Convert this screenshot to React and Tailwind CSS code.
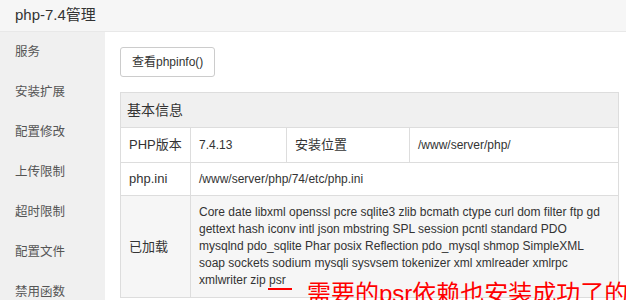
const MENU = ['服务', '安装扩展', '配置修改', '上传限制', '超时限制', '配置文件', '禁用函数'];

const LOADED = [
  'Core date libxml openssl pcre sqlite3 zlib bcmath ctype curl dom filter ftp gd',
  'gettext hash iconv intl json mbstring SPL session pcntl standard PDO',
  'mysqlnd pdo_sqlite Phar posix Reflection pdo_mysql shmop SimpleXML',
  'soap sockets sodium mysqli sysvsem tokenizer xml xmlreader xmlrpc',
  'xmlwriter zip psr',
];

export default function App() {
  return (
    <div
      className="relative w-[626px] h-[300px] overflow-hidden bg-white text-[#333]"
      style={{ fontFamily: '"Liberation Sans", "Noto Sans CJK SC", sans-serif' }}
    >
      {/* Title bar */}
      <div className="h-[32px] bg-[#f6f6f6] border-b border-[#e8e8e8] flex items-center px-[15px] text-[15px] text-[#333]">
        php-7.4管理
      </div>

      <div className="flex h-[268px]">
        {/* Sidebar */}
        <div className="w-[105px] shrink-0 bg-[#f0f0f0]">
          {MENU.map((item) => (
            <div key={item} className="h-[40px] leading-[40px] px-[15px] text-[12.5px] text-[#555]">
              {item}
            </div>
          ))}
        </div>

        {/* Content */}
        <div className="flex-1 pl-[15px] pr-[7px] pt-[15px]">
          <button className="h-[30px] px-[11px] border border-[#ccc] rounded-[3px] bg-white text-[12px] text-[#333]">
            查看phpinfo()
          </button>

          <table className="mt-[15px] w-[499px] border-collapse text-[13px] text-[#333]">
            <thead>
              <tr>
                <th
                  colSpan={4}
                  className="h-[35px] bg-[#f0f0f0] border border-[#ddd] text-left font-normal text-[14px] px-[6px]"
                >
                  基本信息
                </th>
              </tr>
            </thead>
            <tbody>
              <tr className="h-[35px]">
                <td className="w-[70px] border border-[#ddd] px-[8px]">PHP版本</td>
                <td className="w-[96px] border border-[#ddd] px-[8px] text-[12px]">7.4.13</td>
                <td className="w-[123px] border border-[#ddd] px-[8px]">安装位置</td>
                <td className="border border-[#ddd] px-[8px] text-[12px]">/www/server/php/</td>
              </tr>
              <tr className="h-[33px]">
                <td className="border border-[#ddd] px-[8px]">php.ini</td>
                <td colSpan={3} className="border border-[#ddd] px-[8px] text-[12px]">
                  /www/server/php/74/etc/php.ini
                </td>
              </tr>
              <tr className="bg-[#f6f6f6]">
                <td className="border border-[#ddd] px-[8px]">已加载</td>
                <td colSpan={3} className="border border-[#ddd] px-[8px] py-[8px] leading-[17px] text-[12px]">
                  {LOADED.map((line) => (
                    <div key={line} className="whitespace-nowrap">
                      {line}
                    </div>
                  ))}
                </td>
              </tr>
            </tbody>
          </table>
        </div>
      </div>

      {/* Red annotation */}
      <div className="absolute left-[268px] top-[288px] w-[24px] h-[2px] bg-[#f00]" />
      <div className="absolute left-[307px] top-[279px] text-[24px] leading-[30px] text-[#f00] whitespace-nowrap">
        需要的psr依赖也安装成功了的
      </div>
    </div>
  );
}
